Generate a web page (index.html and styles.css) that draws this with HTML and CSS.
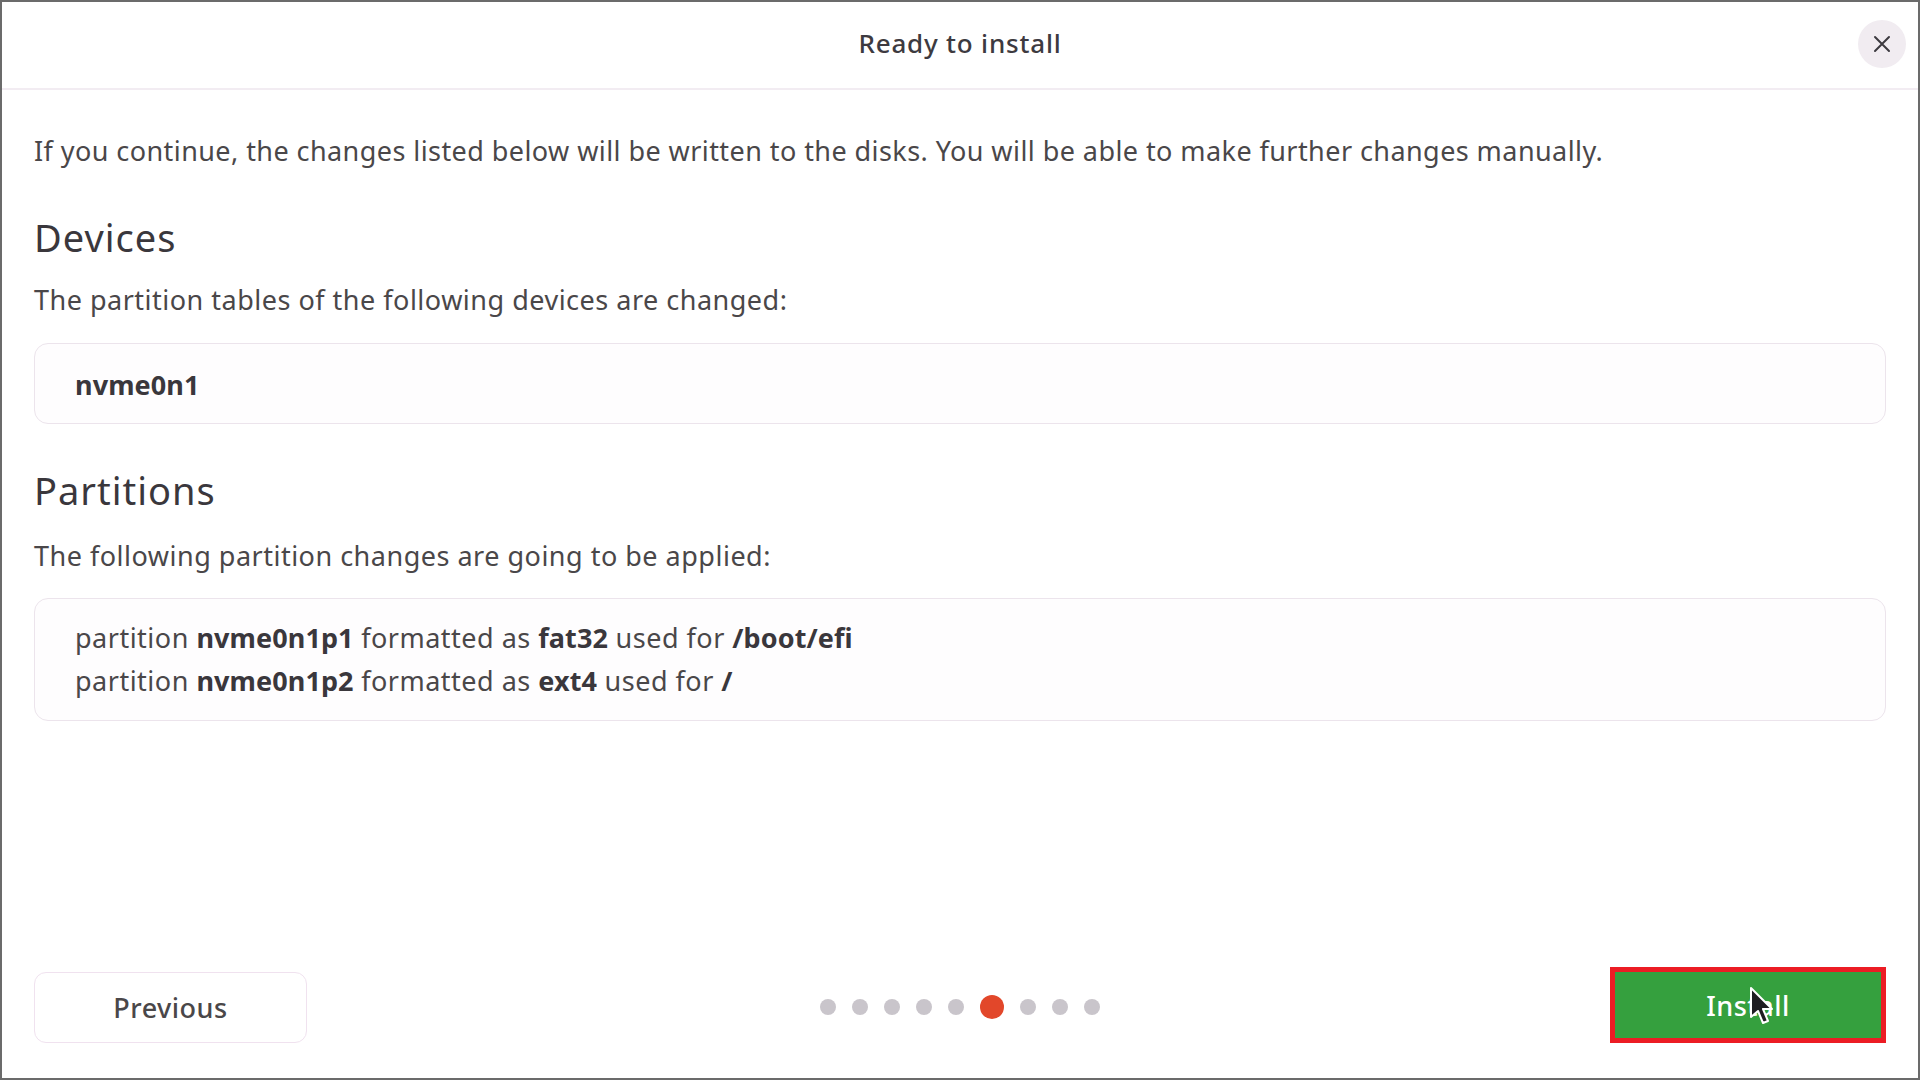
FILE: index.html
```html
<!DOCTYPE html>
<html lang="en">
<head>
<meta charset="utf-8">
<title>Ready to install</title>
<link rel="stylesheet" href="styles.css">
</head>
<body>
<div class="window">
  <header class="titlebar">
    <div class="title">Ready to install</div>
    <button class="close" aria-label="Close">
      <svg width="18" height="18" viewBox="0 0 18 18"><path d="M2 2 L16 16 M16 2 L2 16" stroke="#3d3a40" stroke-width="2" stroke-linecap="round"/></svg>
    </button>
  </header>
  <main class="content">
    <p class="intro">If you continue, the changes listed below will be written to the disks. You will be able to make further changes manually.</p>
    <h2 class="heading">Devices</h2>
    <p class="sub">The partition tables of the following devices are changed:</p>
    <div class="box devices"><b>nvme0n1</b></div>
    <h2 class="heading heading-2">Partitions</h2>
    <p class="sub">The following partition changes are going to be applied:</p>
    <div class="box parts">
      <div class="line">partition <b>nvme0n1p1</b> formatted as <b>fat32</b> used for <b>/boot/efi</b></div>
      <div class="line">partition <b>nvme0n1p2</b> formatted as <b>ext4</b> used for <b>/</b></div>
    </div>
  </main>
  <footer class="footer">
    <div class="left"><button class="btn prev">Previous</button></div>
    <div class="dots">
      <span class="dot"></span><span class="dot"></span><span class="dot"></span><span class="dot"></span><span class="dot"></span><span class="dot active"></span><span class="dot"></span><span class="dot"></span><span class="dot"></span>
    </div>
    <div class="right">
      <button class="btn install">Install
        <svg class="cursor" width="24" height="40" viewBox="0 0 24 40"><path d="M2 2 L2 31 L9 25 L14 37 L19 35 L14 23 L23 23 Z" fill="#1f1d22" stroke="#ffffff" stroke-width="2" stroke-linejoin="round"/></svg>
      </button>
    </div>
  </footer>
</div>
</body>
</html>
```
FILE: styles.css
```css
* { box-sizing: border-box; }
html, body { margin: 0; padding: 0; }
body {
  width: 1920px;
  height: 1080px;
  background: #ffffff;
  font-family: "Noto Sans", "Open Sans", sans-serif;
  color: #4a4749;
  overflow: hidden;
}
.window {
  width: 1920px;
  height: 1080px;
  border: 2px solid #6b6b6b;
  display: flex;
  flex-direction: column;
  background: #ffffff;
}
.titlebar {
  height: 88px;
  flex: none;
  border-bottom: 2px solid #f2ecf2;
  display: flex;
  align-items: center;
  justify-content: center;
  position: relative;
  padding-bottom: 5px;
}
.title {
  font-size: 26px;
  font-weight: 500;
  color: #3d3a40;
  letter-spacing: 0.8px;
}
.close {
  position: absolute;
  right: 12px;
  top: 18px;
  width: 48px;
  height: 48px;
  border-radius: 50%;
  border: none;
  background: #f1ecf1;
  padding: 0;
  display: flex;
  align-items: center;
  justify-content: center;
}
.content {
  flex: 1;
  padding: 41px 32px 0 32px;
}
.intro, .sub {
  margin: 0;
  font-size: 27px;
  line-height: 40px;
  letter-spacing: 0.5px;
  color: #4a4749;
}
.intro { letter-spacing: 0.43px; }
.heading {
  margin: 42px 0 19px 0;
  font-size: 38px;
  line-height: 48px;
  font-weight: 400;
  letter-spacing: 1px;
  color: #3a373c;
}
.heading-2 { margin-top: 42px; margin-bottom: 22px; }
.box {
  border: 1px solid #ece4ec;
  border-radius: 14px;
  background: #fefdfe;
  padding: 0 40px;
  margin-top: 23px;
}
.box b { font-weight: 700; color: #3a373c; letter-spacing: 0.1px; }
.devices {
  height: 81px;
  display: flex;
  align-items: center;
  font-size: 27px;
  padding-top: 2px;
}
.parts {
  margin-top: 22px;
  height: 123px;
  padding-top: 17px;
  font-size: 27px;
  letter-spacing: 0.5px;
}
.line { line-height: 43px; }
.footer {
  flex: none;
  display: grid;
  grid-template-columns: 1fr auto 1fr;
  align-items: center;
  padding: 0 32px 31px 32px;
}
.left { display: flex; }
.right { display: flex; justify-content: flex-end; margin-bottom: 4px; }
.btn {
  font-family: "Noto Sans", "Open Sans", sans-serif;
  font-size: 27px;
  font-weight: 500;
  letter-spacing: 0.5px;
  border-radius: 12px;
}
.prev {
  width: 273px;
  height: 71px;
  border: 1px solid #f0e2ef;
  background: #ffffff;
  color: #4a4749;
}
.install {
  position: relative;
  width: 276px;
  height: 76px;
  border: 5px solid #ec1c24;
  border-radius: 0;
  background: #35a03e;
  color: #ffffff;
  padding: 0;
}
.cursor {
  position: absolute;
  left: 134px;
  top: 14px;
}
.dots {
  display: flex;
  align-items: center;
  gap: 16px;
}
.dot {
  width: 16px;
  height: 16px;
  border-radius: 50%;
  background: #c9c5cb;
}
.dot.active {
  width: 24px;
  height: 24px;
  background: #e2472a;
}
```
